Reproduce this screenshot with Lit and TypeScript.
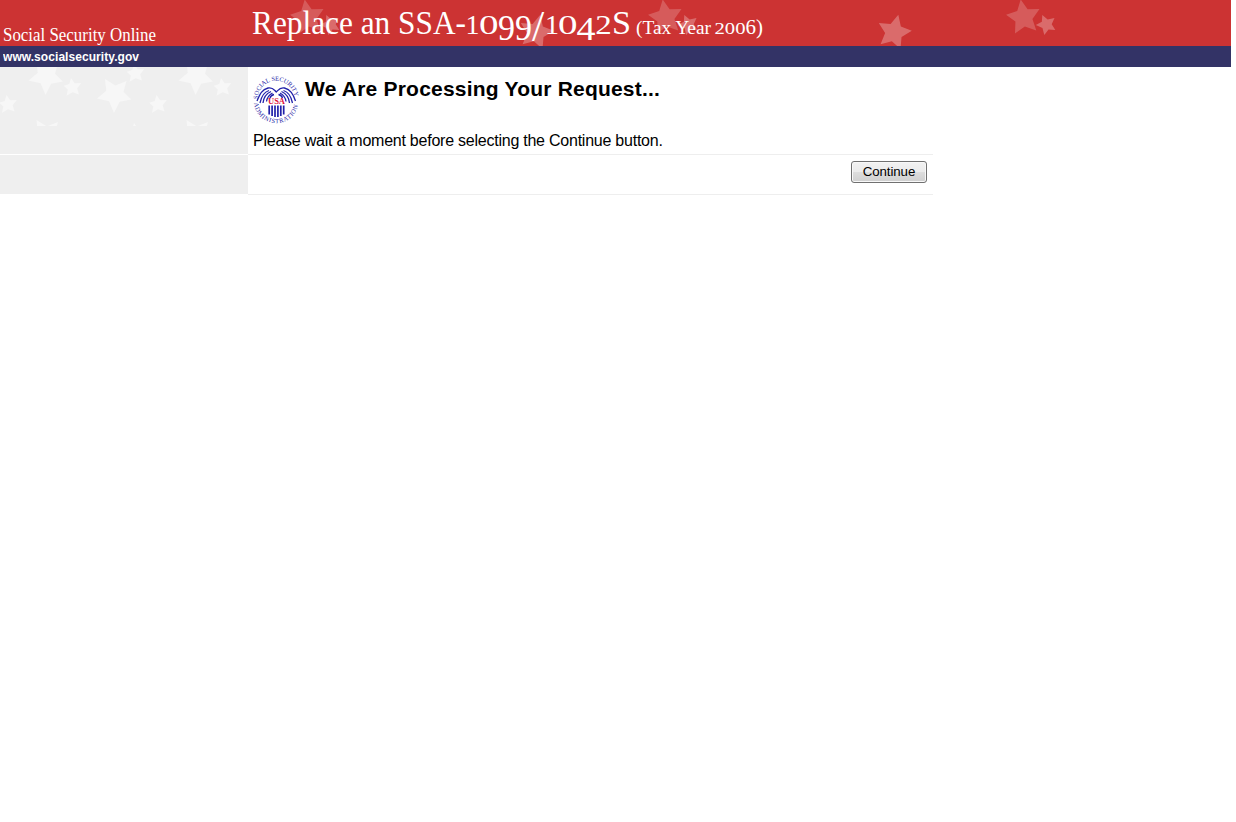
import { LitElement, html, css, svg } from "lit";
import { customElement } from "lit/decorators.js";

// A five-pointed star: the outer points in order, with a notch between each two.
const star = (pts: number[][], dx = 0, dy = 0) => {
  const cx = pts.reduce((s, p) => s + p[0], 0) / 5;
  const cy = pts.reduce((s, p) => s + p[1], 0) / 5;
  const out: string[] = [];
  pts.forEach((p, i) => {
    const q = pts[(i + 1) % 5];
    const nx = cx + ((p[0] + q[0]) / 2 - cx) * 0.62;
    const ny = cy + ((p[1] + q[1]) / 2 - cy) * 0.62;
    out.push(`${p[0] + dx},${p[1] + dy}`, `${nx + dx},${ny + dy}`);
  });
  return svg`<polygon points=${out.join(" ")}></polygon>`;
};

const BIG = [[1020.7, -0.5], [1039.5, 9], [1036.3, 30.5], [1015, 33.5], [1006, 14.8]];
const SMALL = [[1042.3, 15], [1054.5, 18], [1055.3, 30], [1044.3, 35], [1035.8, 25]];
const LOW = [[898.3, 14.8], [911.8, 30.7], [900.5, 49], [880.6, 44.2], [878.8, 23]];

const GREY_BIG = [[105, 12], [126.5, 14], [131.3, 32.5], [114, 46], [97, 31.5]];
const GREY_SMALL = [[71, 11], [81.3, 16], [79, 27.5], [66.5, 28.8], [63.7, 18.8]];

@customElement("ssa-header")
class SsaHeader extends LitElement {
  static styles = css`
    :host { display: block; width: 1231px; font-family: Georgia, "Liberation Serif", serif; }
    .bar { display: flex; height: 46px; background: #cc3333; }
    .site { width: 248px; height: 46px; flex: none; }
    .title { width: 983px; height: 46px; flex: none; }
    svg { display: block; overflow: hidden; }
    text { fill: #fff; font-family: "Liberation Serif", serif; }
    .url { height: 21px; box-sizing: border-box; padding-left: 3px; background: #333366; color: #fff; display: flex; }
    .url svg text { font: bold 12px "Liberation Sans", Arial, sans-serif; }
    .faint { fill: #fff; opacity: 0.2; }
    .mid { fill: #fff; opacity: 0.28; }
  `;

  render() {
    return html`
      <div class="bar">
        <svg class="site" viewBox="0 0 248 46">
          <text x="3" y="41" font-size="19.5" textLength="153" lengthAdjust="spacingAndGlyphs">Social Security Online</text>
        </svg>
        <svg class="title" viewBox="248 0 983 46">
          ${[-716, -358, 0].map((dx) => svg`
            <g class="faint">${star(BIG, dx)}</g>
            <g class="mid">${star(SMALL, dx)}</g>`)}
          ${[-358, 0].map((dx) => svg`<g class="mid">${star(LOW, dx)}</g>`)}
          <text xml:space="preserve" y="34" font-size="33"><tspan x="252" textLength="214" lengthAdjust="spacingAndGlyphs">Replace an SSA-</tspan><tspan x="465.5" font-size="27" textLength="14" lengthAdjust="spacingAndGlyphs">1</tspan><tspan x="479" font-size="27" textLength="19.5" lengthAdjust="spacingAndGlyphs">0</tspan><tspan x="498" y="40" font-size="35.5" textLength="34" lengthAdjust="spacingAndGlyphs">99</tspan><tspan x="532" y="40.5" font-size="44">/</tspan><tspan x="545" y="34" font-size="27" textLength="14" lengthAdjust="spacingAndGlyphs">1</tspan><tspan x="558" font-size="27" textLength="19.5" lengthAdjust="spacingAndGlyphs">0</tspan><tspan x="576.5" y="39.5" font-size="34.5" textLength="19" lengthAdjust="spacingAndGlyphs">4</tspan><tspan x="595.3" y="34" font-size="27" textLength="16.5" lengthAdjust="spacingAndGlyphs">2</tspan><tspan x="612" textLength="19" lengthAdjust="spacingAndGlyphs">S</tspan></text>
          <text xml:space="preserve" y="34" font-size="19.5"><tspan x="636" textLength="75" lengthAdjust="spacingAndGlyphs">(Tax Year</tspan><tspan x="714.5" font-size="16" textLength="31" lengthAdjust="spacingAndGlyphs">200</tspan><tspan x="745.5" font-size="20" textLength="17.5" lengthAdjust="spacingAndGlyphs">6)</tspan></text>
        </svg>
      </div>
      <div class="url">
        <svg width="200" height="21" viewBox="3 46 200 21">
          <text x="3" y="61" textLength="136">www.socialsecurity.gov</text>
        </svg>
      </div>
    `;
  }
}

@customElement("ssa-seal")
class SsaSeal extends LitElement {
  static styles = css`
    :host { display: block; width: 48px; height: 48px; }
    svg { display: block; }
    text { font-family: "Liberation Serif", serif; fill: #2a2aa8; }
    .usa { font-weight: bold; fill: #e0103c; }
    .wing { fill: none; stroke: #2222aa; stroke-width: 1.3; }
    .stripe { stroke: #2222aa; stroke-width: 1.7; fill: none; }
  `;

  render() {
    return html`
      <svg width="48" height="48" viewBox="0 0 48 48">
        <defs>
          <path id="top" d="M5.8 23.2 A18.4 18.4 0 0 1 42.6 23.2"></path>
          <path id="bottom" d="M2 27 A22.3 22.3 0 0 0 46.4 27"></path>
        </defs>
        <text font-size="6.4"><textPath href="#top" textLength="55">SOCIAL SECURITY</textPath></text>
        <text font-size="6.4"><textPath href="#bottom" textLength="63">ADMINISTRATION</textPath></text>
        <path class="wing" d="M5 25 C8 18 10 13.5 16 12 C21 11 22 14 24.3 16 C26.5 14 27.5 11 32.5 12 C38.5 13.5 41 18 43.5 25
          M8 27 C9 22 12 16 17 14.5 M11 27 C11.5 22 14.5 17.5 19 15.5 M14.5 25.5 C15 21 17 19 20.5 17 M18 22 C18.5 20 20 19 22 18.5
          M40.5 27 C39.5 22 36.5 16 31.5 14.5 M37.5 27 C37 22 34 17.5 29.5 15.5 M34 25.5 C33.5 21 31.5 19 28 17 M30.5 22 C30 20 28.5 19 26.5 18.5"></path>
        <text class="usa" x="16" y="28.3" font-size="8.5" textLength="17" lengthAdjust="spacingAndGlyphs">USA</text>
        <path class="stripe" d="M17.2 29.5V38.5 M20.1 29.5V40 M23 29.5V41 M25.9 29.5V41 M28.8 29.5V40 M31.7 29.5V38.5"></path>
      </svg>
    `;
  }
}

@customElement("app-root")
class AppRoot extends LitElement {
  static styles = css`
    :host { display: block; width: 1236px; height: 822px; background: #fff; color: #000; font-family: "Liberation Sans", Arial, sans-serif; overflow: hidden; }
    .grid { display: grid; grid-template-columns: 248px 685px; grid-template-rows: 88px 40px; }
    .side { background: #efefef; }
    .first { border-bottom: 1px solid #fff; }
    .last { height: 39px; }
    .side svg { display: block; }
    .side polygon { fill: #f7f7f7; }
    .main { box-sizing: border-box; border-bottom: 1px solid #eee; padding: 9px 0 0 4px; }
    .head { display: flex; height: 48px; }
    h1 { margin: 0 0 0 5px; font-size: 21px; line-height: 26px; font-weight: bold; letter-spacing: 0.21px; white-space: nowrap; }
    p { margin: 7px 0 0 1px; font-size: 16px; line-height: 20px; letter-spacing: -0.237px; white-space: nowrap; }
    .actions { display: flex; justify-content: flex-end; align-items: flex-start; box-sizing: border-box; height: 41px; padding: 7px 6px 0 0; margin-top: -1px; border-bottom: 1px solid #eee; }
    button { box-sizing: border-box; width: 76px; height: 22px; padding: 0; border: 1px solid #707070; border-radius: 3px; box-shadow: inset 0 0 0 1px #f8f8f8; background: linear-gradient(#f2f2f2 0, #ebebeb 48%, #dddddd 52%, #cfcfcf); color: #000; font: 13.3px/18px "Liberation Sans", Arial, sans-serif; letter-spacing: -0.1px; }
  `;

  render() {
    return html`
      <ssa-header></ssa-header>
      <div class="grid">
        <div class="side first">
          <svg width="248" height="59" viewBox="0 0 248 59">
            ${[0, 150].map((dx) => [0, 59].map((dy) => svg`
              ${star(GREY_BIG, dx, dy)}
              ${star(GREY_BIG, dx - 68.5, dy - 18)}
              ${star(GREY_SMALL, dx, dy)}
              ${star(GREY_SMALL, dx - 64.5, dy + 17)}
              ${star(GREY_SMALL, dx + 63, dy - 14)}`))}
          </svg>
        </div>
        <div class="main">
          <div class="head">
            <ssa-seal></ssa-seal>
            <h1>We Are Processing Your Request...</h1>
          </div>
          <p>Please wait a moment before selecting the Continue button.</p>
        </div>
        <div class="side last"></div>
        <div class="actions"><button type="button">Continue</button></div>
      </div>
    `;
  }
}
